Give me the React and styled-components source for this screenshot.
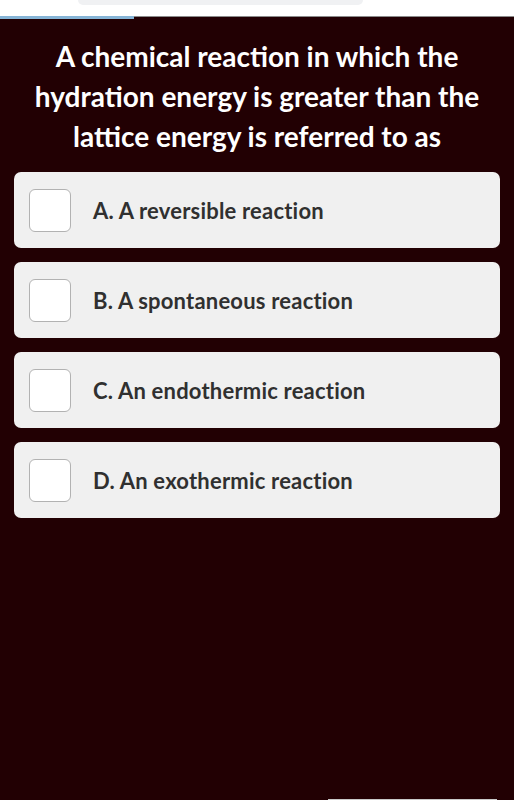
import React from "react";
import styled, { createGlobalStyle } from "styled-components";

const GlobalStyle = createGlobalStyle`
  html, body {
    margin: 0;
    padding: 0;
    background: #220003;
  }
  * {
    box-sizing: border-box;
  }
`;

const options = [
  "A. A reversible reaction",
  "B. A spontaneous reaction",
  "C. An endothermic reaction",
  "D. An exothermic reaction",
];

function App() {
  return (
    <>
      <GlobalStyle />
      <Screen>
        <TopBar>
          <Pill />
        </TopBar>
        <Progress>
          <ProgressFill $value={26} />
        </Progress>
        <Question>
          A chemical reaction in which the hydration energy is greater than the
          lattice energy is referred to as
        </Question>
        <OptionList>
          {options.map((o) => (
            <Option key={o}>
              <Check />
              <OptionText>{o}</OptionText>
            </Option>
          ))}
        </OptionList>
        <Footer>
          <FooterEdge />
        </Footer>
      </Screen>
    </>
  );
}

export default App;

const Screen = styled.div`
  height: 800px;
  overflow: hidden;
  display: flex;
  flex-direction: column;
  background: #220003;
  font-family: Lato, "Open Sans", sans-serif;
`;

const TopBar = styled.div`
  height: 16px;
  background: #ffffff;
  display: flex;
  padding-left: 78px;
`;

const Pill = styled.div`
  width: 285px;
  height: 5px;
  background: #f0f1f3;
  border-radius: 0 0 14px 14px;
`;

const Progress = styled.div`
  height: 3px;
  background: #220003;
  border-top: 1px solid #8a8a8a;
  position: relative;
`;

const ProgressFill = styled.div`
  position: absolute;
  left: 0;
  top: -1px;
  height: 3px;
  width: ${(p) => p.$value}%;
  background: #86b4d6;
`;

const Question = styled.h1`
  margin: 0;
  padding: 17px 24px 0;
  text-align: center;
  color: #ffffff;
  font-size: 28px;
  line-height: 40px;
  font-weight: 700;
  letter-spacing: 0;
`;

const OptionList = styled.div`
  display: flex;
  flex-direction: column;
  gap: 14px;
  padding: 16px 14px 0;
`;

const Option = styled.div`
  height: 76px;
  background: #f0f0f0;
  border-radius: 7px;
  display: flex;
  align-items: center;
  gap: 22px;
  padding: 0 15px;
`;

const Check = styled.div`
  width: 42px;
  height: 43px;
  flex-shrink: 0;
  background: #ffffff;
  border: 1.5px solid #b2b2b2;
  border-radius: 6px;
`;

const OptionText = styled.span`
  color: #303030;
  font-size: 22px;
  font-weight: 700;
  letter-spacing: 0.2px;
`;

const Footer = styled.div`
  margin-top: auto;
  display: flex;
  padding-left: 328px;
`;

const FooterEdge = styled.div`
  width: 169px;
  height: 1px;
  background: #c9c9c9;
`;
